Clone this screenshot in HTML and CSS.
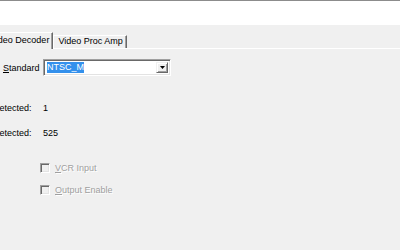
FILE: index.html
```html
<!DOCTYPE html>
<html>
<head>
<meta charset="utf-8">
<link rel="stylesheet" href="styles.css">
</head>
<body>
<div class="titlebar"></div>
<div class="dialog">
  <div class="tabs">
    <div class="tab active">Video Decoder</div>
    <div class="tab">Video Proc Amp</div>
    <div class="tab-fill"></div>
  </div>
  <div class="content">
    <div class="row row-standard">
      <label class="label"><u>S</u>tandard</label>
      <div class="combo">
        <span class="combo-text"><span class="sel">NTSC_M</span></span>
        <span class="combo-btn"><svg width="5" height="3" viewBox="0 0 5 3"><path d="M0 0h5L2.5 3z" fill="#000"/></svg></span>
      </div>
    </div>
    <div class="row row-info first">
      <span class="label cut">Detected:</span>
      <span class="value">1</span>
    </div>
    <div class="row row-info second">
      <span class="label cut">Detected:</span>
      <span class="value">525</span>
    </div>
    <div class="row check first-check">
      <span class="box"></span>
      <span class="check-label"><u>V</u>CR Input</span>
    </div>
    <div class="row check second-check">
      <span class="box"></span>
      <span class="check-label"><u>O</u>utput Enable</span>
    </div>
  </div>
</div>
</body>
</html>
```
FILE: styles.css
```css
html, body {
  margin: 0;
  padding: 0;
}
body {
  width: 400px;
  height: 250px;
  overflow: hidden;
  background: #f0f0f0;
  font-family: "Liberation Sans", Arial, sans-serif;
  font-size: 9px;
  color: #000;
}
.titlebar {
  height: 24px;
  background: #fff;
  border-top: 1px solid #8c8c8c;
}
.dialog {
  padding-top: 7px;
}
.tabs {
  display: flex;
  align-items: flex-end;
  height: 16px;
  margin-left: -16px;
  border-bottom: 1px solid #fff;
}
.tab {
  box-sizing: border-box;
  height: 13px;
  line-height: 11px;
  padding: 0 3px 0 4px;
  border-top: 1px solid #fff;
  border-left: 1px solid #fff;
  border-right: 1px solid #696969;
  box-shadow: inset -1px 0 0 #a0a0a0;
  white-space: nowrap;
}
.tab.active {
  height: 17px;
  line-height: 14px;
  margin-bottom: -1px;
  padding: 0 3px 0 5px;
  background: #f0f0f0;
  position: relative;
}
.tab-fill {
  flex: 1;
}
.content {
  display: flex;
  flex-direction: column;
}
.row {
  display: flex;
  align-items: center;
}
.row-standard {
  margin-top: 10px;
  height: 17px;
}
.label {
  width: 43px;
  box-sizing: border-box;
  padding-left: 3px;
  white-space: nowrap;
}
.label.cut {
  padding-left: 0;
  text-indent: -7px;
}
.combo {
  box-sizing: border-box;
  width: 128px;
  height: 17px;
  background: #fff;
  border-top: 1px solid #a0a0a0;
  border-left: 1px solid #a0a0a0;
  border-right: 1px solid #fff;
  border-bottom: 1px solid #fff;
  box-shadow: inset 1px 1px 0 #696969, inset -1px -1px 0 #e3e3e3;
  display: flex;
  align-items: center;
  padding: 2px 2px 2px 3px;
}
.combo-text {
  flex: 1;
  display: flex;
}
.sel {
  background: #3390ec;
  color: #fff;
  line-height: 11px;
}
.combo-btn {
  box-sizing: border-box;
  width: 12px;
  height: 11px;
  background: #f0f0f0;
  border-top: 1px solid #f0f0f0;
  border-left: 1px solid #f0f0f0;
  border-right: 1px solid #696969;
  border-bottom: 1px solid #696969;
  box-shadow: inset 1px 1px 0 #fff, inset -1px -1px 0 #a0a0a0;
  display: flex;
  align-items: center;
  justify-content: center;
}
.row-info {
  height: 14px;
}
.row-info.first {
  margin-top: 25px;
}
.row-info.second {
  margin-top: 11px;
}
.check {
  height: 14px;
  padding-left: 40px;
  gap: 5px;
  color: #a0a0a0;
}
.first-check {
  margin-top: 21px;
}
.second-check {
  margin-top: 8px;
}
.box {
  box-sizing: border-box;
  width: 10px;
  height: 10px;
  border-top: 1px solid #a0a0a0;
  border-left: 1px solid #a0a0a0;
  border-right: 1px solid #fff;
  border-bottom: 1px solid #fff;
  box-shadow: inset 1px 1px 0 #696969, inset -1px -1px 0 #e3e3e3;
  background: #f0f0f0;
}
.check-label {
  text-shadow: 1px 1px 0 #fff;
}
```
